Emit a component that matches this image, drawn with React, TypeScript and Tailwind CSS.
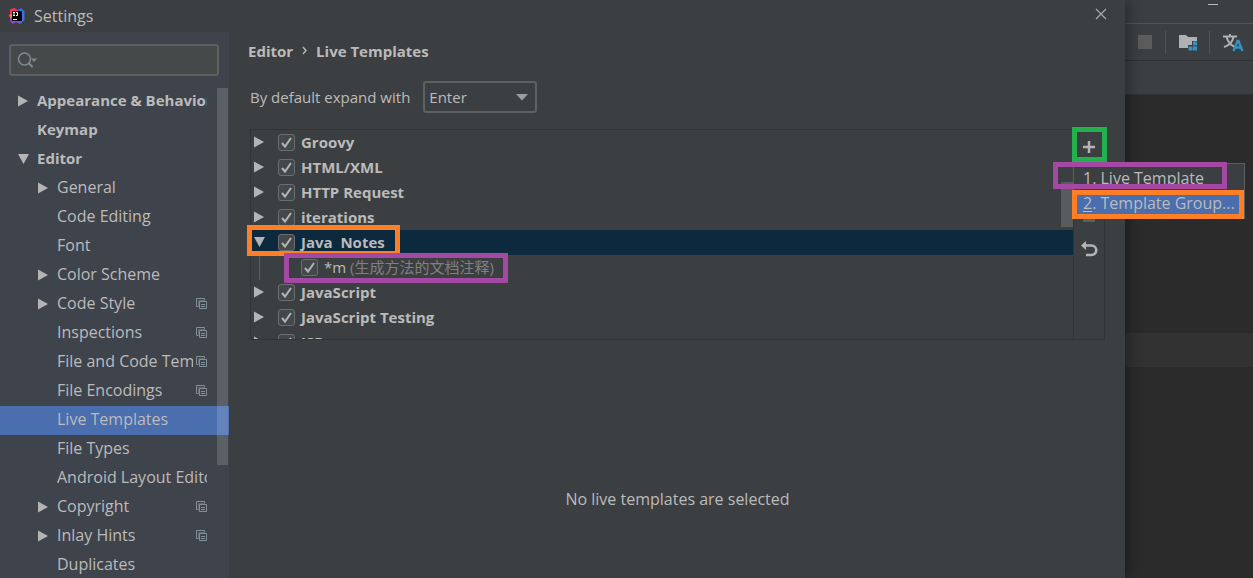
import { useState } from 'react'

type TreeItem = {
  label: string
  level: number
  arrow?: 'open' | 'closed'
  bold?: boolean
  perProject?: boolean
}

type TemplateGroup = {
  name: string
  open?: boolean
  children?: { key: string; description: string }[]
}

const settingsTree: TreeItem[] = [
  { label: 'Appearance & Behavior', level: 0, arrow: 'closed', bold: true },
  { label: 'Keymap', level: 0, bold: true },
  { label: 'Editor', level: 0, arrow: 'open', bold: true },
  { label: 'General', level: 1, arrow: 'closed' },
  { label: 'Code Editing', level: 1 },
  { label: 'Font', level: 1 },
  { label: 'Color Scheme', level: 1, arrow: 'closed' },
  { label: 'Code Style', level: 1, arrow: 'closed', perProject: true },
  { label: 'Inspections', level: 1, perProject: true },
  { label: 'File and Code Templates', level: 1, perProject: true },
  { label: 'File Encodings', level: 1, perProject: true },
  { label: 'Live Templates', level: 1 },
  { label: 'File Types', level: 1 },
  { label: 'Android Layout Editor', level: 1 },
  { label: 'Copyright', level: 1, arrow: 'closed', perProject: true },
  { label: 'Inlay Hints', level: 1, arrow: 'closed', perProject: true },
  { label: 'Duplicates', level: 1 },
]

const templateGroups: TemplateGroup[] = [
  { name: 'Groovy' },
  { name: 'HTML/XML' },
  { name: 'HTTP Request' },
  { name: 'iterations' },
  { name: 'Java  Notes', open: true, children: [{ key: '*m', description: '(生成方法的文档注释)' }] },
  { name: 'JavaScript' },
  { name: 'JavaScript Testing' },
  { name: 'JSP' },
]

function Arrow({ open }: { open?: boolean }) {
  return (
    <svg width="12" height="12" viewBox="0 0 12 12" className="shrink-0" fill="#b4b4b4" aria-hidden="true">
      {open ? <path d="M1 1h11L6.5 11z" /> : <path d="M1 0.5v11L11 6z" />}
    </svg>
  )
}

function ProjectIcon() {
  return (
    <svg width="11" height="11" viewBox="0 0 11 11" className="ml-[3px] shrink-0" fill="none" stroke="#83909a" aria-hidden="true">
      <path d="M2.500 8.500h-2v-8h8v2" />
      <path d="M2.500 8V2.500h6" stroke="#5f6973" />
      <path d="M3.500 3.500h7v7h-7zM5 6.500h4M5 8.500h4" />
    </svg>
  )
}

function IdeaLogo() {
  return (
    <svg width="16" height="16" viewBox="0 0 16 16" aria-hidden="true">
      <path d="M1 1.500 5 0l5 2.500L6 9 1 7.500z" fill="#fc2e63" />
      <path d="M0 7 4 5v6L1.500 11z" fill="#fc801d" />
      <path d="M8 3 12 0l3.500 3.500V12L11 16 8 12z" fill="#3f6fe8" />
      <path d="M1 10.500 4 9l8 4-1.500 3L7 14l-3 2-2.500-2z" fill="#9143dd" />
      <path d="M3 3h10v10H3z" fill="#000" />
      <path d="M4 4.500h2M5 4.500v3M4 7.500h2M7 4.500h1.500v3H7M4 11.500h4" fill="none" stroke="#fff" />
    </svg>
  )
}

function Check({ label }: { label: string }) {
  return (
    <span className="grid shrink-0">
      <input
        type="checkbox"
        defaultChecked
        aria-label={label}
        className="peer col-start-1 row-start-1 size-[17px] appearance-none rounded-[3px] border border-[#6b6e6f] bg-[#43494a]"
      />
      <svg
        width="17"
        height="17"
        viewBox="0 0 17 17"
        className="pointer-events-none invisible col-start-1 row-start-1 peer-checked:visible"
        fill="none"
        stroke="#b4b4b4"
        strokeWidth="2"
        aria-hidden="true"
      >
        <path d="M4 9 7 12.500 13 4" />
      </svg>
    </span>
  )
}

function Sidebar({ selected, onSelect }: { selected: string; onSelect: (label: string) => void }) {
  return (
    <aside className="relative flex w-[229px] shrink-0 flex-col overflow-hidden bg-[#3f434c]">
      <div className="relative mt-3 mr-[10px] mb-[11px] ml-[9px]">
        <input
          type="text"
          aria-label="Search settings"
          className="block h-8 w-full rounded-[3px] border-2 border-[#5e6162] bg-[#45494a] pl-9 text-[#bbbbbb] outline-none"
        />
        <svg width="22" height="18" viewBox="0 0 22 18" className="absolute top-2 left-2" fill="none" stroke="#7e8a94" aria-hidden="true">
          <circle cx="7.500" cy="7" r="6" strokeWidth="1.500" />
          <path d="m11.500 11 4 4" strokeWidth="2" />
          <path d="M14 6.500h6L17 10z" fill="#7e8a94" stroke="none" />
        </svg>
      </div>
      <nav aria-label="Settings sections">
        {settingsTree.map((item) => (
          <button
            key={item.label}
            type="button"
            onClick={() => onSelect(item.label)}
            className={`flex h-[29px] w-full items-center pr-[22px] pb-[2px] text-left ${
              item.level === 0 ? 'pl-[17px]' : 'pl-[37px]'
            } ${item.bold ? 'text-[15px] font-bold' : ''} ${selected === item.label ? 'bg-[#4b6eaf]' : ''}`}
          >
            {item.arrow ? <Arrow open={item.arrow === 'open'} /> : <span className="w-3 shrink-0" />}
            <span className="ml-2 min-w-0 flex-1 overflow-hidden pb-[2px] whitespace-nowrap">{item.label}</span>
            {item.perProject && <ProjectIcon />}
          </button>
        ))}
      </nav>
      {/* scrollbar thumb */}
      <div className="absolute top-14 right-px h-[377px] w-[11px] bg-white/15" />
    </aside>
  )
}

function TemplateList() {
  return (
    <div className="relative h-full min-w-0 flex-1 overflow-hidden">
      {templateGroups.map((group) => (
        <div key={group.name}>
          <div className={`flex h-[25px] items-center pb-px pl-[2px] ${group.open ? 'bg-[#0d293e]' : ''}`}>
            <Arrow open={group.open} />
            <label className="ml-[13px] flex items-center gap-[6px] text-[15px] font-bold whitespace-pre">
              <Check label={group.name} />
              <span className="pb-px">{group.name}</span>
            </label>
          </div>
          {group.children?.map((child) => (
            <div key={child.key} className="ml-2 flex h-[25px] items-center border-l border-[#5a5d5f] pb-px pl-[41px]">
              <label className="flex items-center gap-[6px] text-[15px] whitespace-nowrap">
                <Check label={child.key} />
                <span className="pb-px">
                  {child.key} <span className="text-[#808080]">{child.description}</span>
                </span>
              </label>
            </div>
          ))}
        </div>
      ))}
      <div className="absolute top-[52px] right-0 h-[45px] w-3 bg-[#595b5d]" />
    </div>
  )
}

function ListToolbar() {
  return (
    <div className="relative flex w-[31px] shrink-0 flex-col border-l border-[#323435]">
      <button type="button" aria-label="Add" className="flex h-[34px] items-center justify-center">
        <svg width="14" height="14" viewBox="0 0 14 14" stroke="#b4b4b4" strokeWidth="2.500">
          <path d="M7 1v12M1 7h12" />
        </svg>
      </button>
      <button type="button" aria-label="Remove" className="flex h-[34px] items-center justify-center">
        <svg width="14" height="14" viewBox="0 0 14 14" stroke="#5a5d5f" strokeWidth="2">
          <path d="M1 7h12" />
        </svg>
      </button>
      <button type="button" aria-label="Duplicate" className="flex h-[34px] items-center justify-center">
        <svg width="14" height="16" viewBox="0 0 14 16" fill="#5a5d5f">
          <path d="M1 2h12v13H1z" />
        </svg>
      </button>
      <button type="button" aria-label="Restore defaults" className="flex h-[34px] items-center justify-center">
        <svg width="18" height="18" viewBox="0 0 18 18" fill="none" stroke="#b4b4b4" strokeWidth="2.500">
          <path d="M4 5.500h7.500a4.750 4.750 0 0 1 0 9.500H6" />
          <path d="M6 1v9L1 5.500z" fill="#b4b4b4" stroke="none" />
        </svg>
      </button>
      <div
        role="menu"
        className="absolute top-[33px] -left-px w-[172px] border border-[#5c5f61] bg-[#3c3f41] py-[2px] whitespace-nowrap"
      >
        <button type="button" role="menuitem" className="flex h-[25px] w-full items-center pb-[2px] pl-[9px]">
          <span>1. Live Template</span>
        </button>
        <button type="button" role="menuitem" className="flex h-[25px] w-full items-center bg-[#4b6eaf] pb-[2px] pl-[9px]">
          <span>
            <span className="underline underline-offset-2">2</span>. Template Group...
          </span>
        </button>
      </div>
    </div>
  )
}

function LiveTemplatesPage() {
  return (
    <main className="min-w-0 flex-1 pr-5 pl-[19px]">
      <h1 className="flex h-[37px] items-center gap-2 text-[15px] font-bold">
        <span>Editor</span>
        <svg width="7" height="9" viewBox="0 0 7 9" fill="none" stroke="#b4b4b4" strokeWidth="1.500" aria-hidden="true">
          <path d="m2 1 3 3.500L2 8" />
        </svg>
        <span>Live Templates</span>
      </h1>
      <div className="pl-[2px]">
        <div className="mt-3 flex items-center gap-[13px] text-[15px]">
          <label htmlFor="expand">By default expand with</label>
          <div className="relative">
            <select
              id="expand"
              defaultValue="Enter"
              className="block h-8 w-[114px] appearance-none rounded-[3px] border-2 border-[#5e6162] bg-[#3c3f41] pl-1 outline-none"
            >
              <option>Enter</option>
              <option>Tab</option>
              <option>Space</option>
            </select>
            <svg width="12" height="7" viewBox="0 0 12 7" className="pointer-events-none absolute top-[13px] right-[9px]" fill="#9a9da0" aria-hidden="true">
              <path d="M0 0h12L6 6.500z" />
            </svg>
          </div>
        </div>

        <div className="relative mt-4 flex h-[211px] border border-[#323435]">
          <TemplateList />
          <ListToolbar />
          {/* highlight frames */}
          <div className="pointer-events-none absolute top-[95px] -left-1 h-[31px] w-[153px] border-5 border-[#ff7f27]" />
          <div className="pointer-events-none absolute top-[123px] left-[33px] h-[30px] w-[224px] border-5 border-[#a349a4]" />
          <div className="pointer-events-none absolute -top-[3px] -right-[3px] h-[35px] w-[35px] border-5 border-[#22b14c]" />
          <div className="pointer-events-none absolute top-8 -right-[123px] h-[27px] w-[174px] border-5 border-[#a349a4]" />
          <div className="pointer-events-none absolute top-[60px] -right-[140px] h-[29px] w-[172px] border-5 border-[#ff7f27]" />
        </div>

        <p className="mt-[149px] text-center">No live templates are selected</p>
      </div>
    </main>
  )
}

function EditorBackdrop() {
  return (
    <div className="flex w-32 shrink-0 flex-col bg-[#2b2b2b]">
      <div className="flex h-6 items-start justify-end border-b border-[#515456] bg-[#3c3f41] pr-[35px]">
        <button type="button" aria-label="Minimize" className="pt-1">
          <svg width="10" height="1" viewBox="0 0 10 1" fill="#bbbbbb">
            <path d="M0 0h10v1H0z" />
          </svg>
        </button>
      </div>
      <div className="flex h-[37px] items-center justify-between border-b border-[#2f3132] bg-[#3c3f41] pr-[9px] pl-[13px]">
        <button type="button" aria-label="Stop">
          <svg width="14" height="14" viewBox="0 0 14 14" fill="#5c5c5c">
            <path d="M0 0h14v14H0z" />
          </svg>
        </button>
        <span className="h-[23px] w-px bg-[#515456]" />
        <button type="button" aria-label="Project structure">
          <svg width="18" height="18" viewBox="0 0 18 18">
            <path d="M0 2h7l2 2h9v4h-5v4H9v3H0z" fill="#afb1b3" />
            <path d="M14 8.500h4v4h-4zM9.500 13.500h4v4h-4zM14 13.500h4v4h-4z" fill="#3592c4" />
          </svg>
        </button>
        <span className="h-[23px] w-px bg-[#515456]" />
        <button type="button" aria-label="Translate">
          <svg width="21" height="19" viewBox="0 0 21 19" fill="none" strokeWidth="2">
            <path d="M0 3.500h14M7 1v2M3.500 4C5 9 8 12 11 13.500M10.500 4C9.500 9 6 12.500 1 14" stroke="#afb1b3" />
            <path d="m10.500 18 4-10h1l4 10M12 14.500h6" stroke="#3592c4" strokeWidth="2.300" />
          </svg>
        </button>
      </div>
      <div className="h-[34px] border-b border-[#323232] bg-[#3c3f41]" />
      <div className="mt-[238px] h-[34px] bg-[#323232]" />
    </div>
  )
}

export default function App() {
  const [selected, setSelected] = useState('Live Templates')

  return (
    <div className="flex h-screen overflow-hidden bg-[#2b2b2b] font-['Open_Sans','Noto_Sans_CJK_SC',sans-serif] text-[16px] leading-5 text-[#bbbbbb]">
      <div className="relative z-10 flex min-w-0 flex-1 flex-col bg-[#3c3f41] shadow-[2px_0_14px_rgba(0,0,0,0.4)]">
        <header className="flex h-8 shrink-0 items-center gap-[9px] pr-[18px] pl-[9px]">
          <IdeaLogo />
          <span className="flex-1">Settings</span>
          <button type="button" aria-label="Close" className="pb-1">
            <svg width="12" height="12" viewBox="0 0 12 12" stroke="#a8aaab" strokeWidth="1.200">
              <path d="m1 1 10 10M11 1 1 11" />
            </svg>
          </button>
        </header>
        <div className="flex min-h-0 flex-1">
          <Sidebar selected={selected} onSelect={setSelected} />
          <LiveTemplatesPage />
        </div>
      </div>
      <EditorBackdrop />
    </div>
  )
}
